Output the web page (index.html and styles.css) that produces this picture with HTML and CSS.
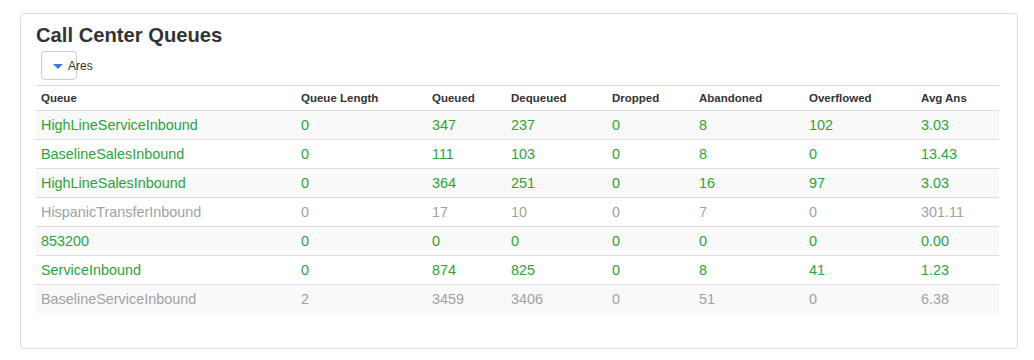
FILE: index.html
```html
<!DOCTYPE html>
<html>
<head>
<meta charset="utf-8">
<link rel="stylesheet" href="styles.css">
</head>
<body>
<div class="panel">
  <h2 class="title">Call Center Queues</h2>
  <div class="toolbar">
    <button class="dropdown" type="button"><span class="caret"></span><span class="label">Ares</span></button>
  </div>
  <table class="queues">
    <colgroup>
      <col class="c1"><col class="c2"><col class="c3"><col class="c4"><col class="c5"><col class="c6"><col class="c7"><col class="c8">
    </colgroup>
    <thead>
      <tr><th>Queue</th><th>Queue Length</th><th>Queued</th><th>Dequeued</th><th>Dropped</th><th>Abandoned</th><th>Overflowed</th><th>Avg Ans</th></tr>
    </thead>
    <tbody>
      <tr class="ok"><td>HighLineServiceInbound</td><td>0</td><td>347</td><td>237</td><td>0</td><td>8</td><td>102</td><td>3.03</td></tr>
      <tr class="ok"><td>BaselineSalesInbound</td><td>0</td><td>111</td><td>103</td><td>0</td><td>8</td><td>0</td><td>13.43</td></tr>
      <tr class="ok"><td>HighLineSalesInbound</td><td>0</td><td>364</td><td>251</td><td>0</td><td>16</td><td>97</td><td>3.03</td></tr>
      <tr class="idle"><td>HispanicTransferInbound</td><td>0</td><td>17</td><td>10</td><td>0</td><td>7</td><td>0</td><td>301.11</td></tr>
      <tr class="ok"><td>853200</td><td>0</td><td>0</td><td>0</td><td>0</td><td>0</td><td>0</td><td>0.00</td></tr>
      <tr class="ok"><td>ServiceInbound</td><td>0</td><td>874</td><td>825</td><td>0</td><td>8</td><td>41</td><td>1.23</td></tr>
      <tr class="idle"><td>BaselineServiceInbound</td><td>2</td><td>3459</td><td>3406</td><td>0</td><td>51</td><td>0</td><td>6.38</td></tr>
    </tbody>
  </table>
</div>
</body>
</html>
```

FILE: styles.css
```css
html, body {
  margin: 0;
  padding: 0;
  background: #fff;
  font-family: "Liberation Sans", Arial, sans-serif;
  color: #333;
}

.panel {
  box-sizing: border-box;
  width: 998px;
  margin: 13px 0 0 20px;
  padding: 10px 18px 35px 15px;
  border: 1px solid #dddddd;
  border-radius: 4px;
}

.title {
  margin: 0;
  font-size: 20.2px;
  line-height: 22px;
  font-weight: bold;
  color: #333;
}

.toolbar {
  display: flex;
  margin: 5px 0 5px 5px;
}

.dropdown {
  box-sizing: border-box;
  width: 36px;
  height: 29px;
  padding: 0 0 0 11px;
  margin: 0;
  border: 1px solid #cccccc;
  border-radius: 4px;
  background: #fff;
  display: flex;
  align-items: center;
  white-space: nowrap;
  overflow: visible;
  font-family: "Liberation Sans", Arial, sans-serif;
  font-size: 12px;
  color: #333;
}

.caret {
  display: block;
  width: 0;
  height: 0;
  border-left: 5.5px solid transparent;
  border-right: 5.5px solid transparent;
  border-top: 5px solid #3b7fd0;
  margin-right: 5px;
  margin-top: 1px;
}

.label {
  display: block;
}

.queues {
  width: 963px;
  border-collapse: collapse;
  table-layout: fixed;
}

.c1 { width: 260px; }
.c2 { width: 131px; }
.c3 { width: 79px; }
.c4 { width: 101px; }
.c5 { width: 87px; }
.c6 { width: 110px; }
.c7 { width: 112px; }
.c8 { width: 83px; }

.queues th {
  text-align: left;
  font-size: 11.5px;
  font-weight: bold;
  line-height: 16px;
  height: 16px;
  padding: 4px 5px 4px 5px;
  border-top: 1px solid #dddddd;
  color: #333;
  white-space: nowrap;
}

.queues td {
  font-size: 14.4px;
  line-height: 20px;
  height: 20px;
  padding: 4px 5px;
  border-top: 1px solid #dddddd;
  white-space: nowrap;
}

.queues tbody tr:nth-child(odd) td {
  background: #f9f9f9;
}

.queues tr.ok td {
  color: #2ea23a;
}

.queues tr.idle td {
  color: #a2a2a2;
}
```
